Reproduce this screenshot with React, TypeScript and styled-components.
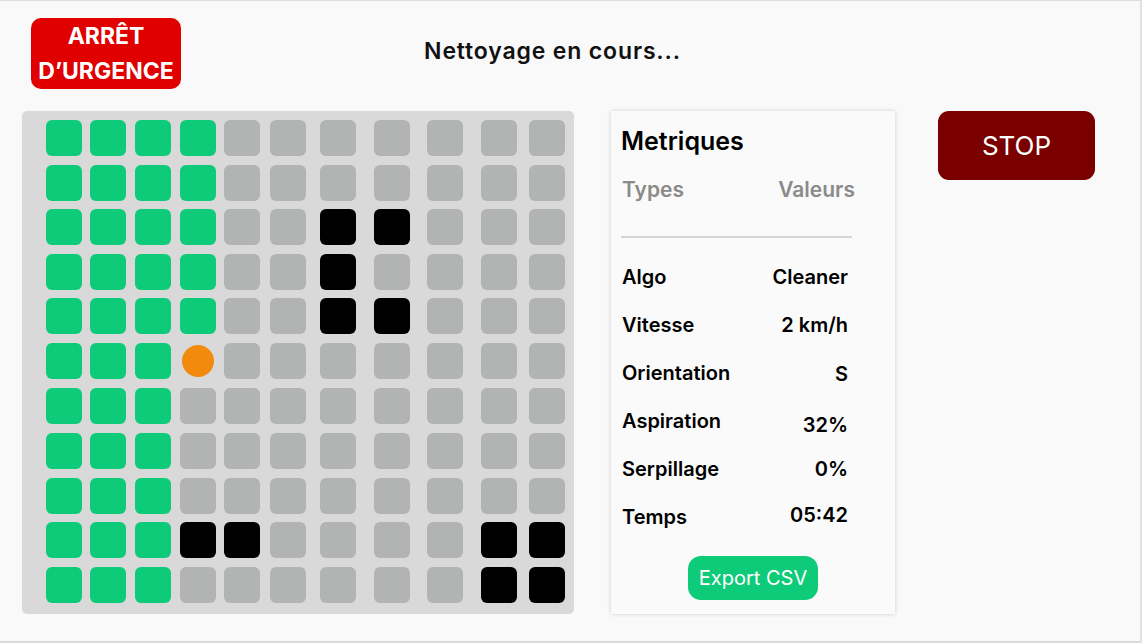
import React from "react";
import styled, { createGlobalStyle } from "styled-components";

const Global = createGlobalStyle`
  html, body { margin: 0; padding: 0; background: #f9f9f9; }
  body { font-family: Inter, "Noto Sans", Arial, sans-serif; }
`;

const Frame = styled.div`
  box-sizing: border-box;
  width: 1142px;
  height: 643px;
  background: #f9f9f9;
  border-top: 1px solid #dcdcdc;
  border-right: 2px solid #e2e2e2;
  border-bottom: 2px solid #dcdcdc;
  display: flex;
  flex-direction: column;
  overflow: hidden;
`;

const Header = styled.header`
  display: flex;
  align-items: flex-start;
  padding: 17px 216px 0 31px;
`;

const EmergencyButton = styled.button`
  width: 150px;
  height: 71px;
  border: none;
  border-radius: 10px;
  background: #e00000;
  color: #fff;
  font-family: Inter, Roboto, sans-serif;
  font-weight: 700;
  font-size: 23px;
  line-height: 35px;
  padding: 1px 0 0;
  text-align: center;
`;

const Title = styled.h1`
  flex: 1;
  margin: 19px 0 0;
  text-align: center;
  font-size: 23px;
  font-weight: 600;
  letter-spacing: 0.85px;
  line-height: 28px;
  color: #111;
`;

const Main = styled.main`
  display: flex;
  align-items: flex-start;
  padding: 22px 0 0 22px;
`;

const Board = styled.div`
  box-sizing: border-box;
  width: 552px;
  height: 503px;
  background: #d9d9d9;
  border-radius: 5px;
  padding: 9px 0 0 24px;
  display: grid;
  grid-template-columns: 44px 45px 45px 44px 46px 50px 54px 53px 54px 48px 36px;
  grid-template-rows: 45px 44px 45px 44px 45px 45px 45px 45px 44px 45px 36px;
`;

const Cell = styled.div<{ $kind: string }>`
  width: 36px;
  height: 36px;
  border-radius: 6px;
  background: ${(p) =>
    p.$kind === "G" ? "#0ecb7a" : p.$kind === "B" ? "#000" : p.$kind === "O" ? "transparent" : "#b1b4b3"};
  display: flex;
  align-items: center;
  justify-content: center;
`;

const Robot = styled.div`
  width: 32px;
  height: 32px;
  border-radius: 50%;
  background: #f28a0e;
`;

const Card = styled.section`
  box-sizing: border-box;
  width: 284px;
  height: 503px;
  margin-left: 37px;
  background: #fafafa;
  box-shadow: 0 0 4px rgba(0, 0, 0, 0.18);
  padding: 15px 10px 0 10px;
  display: flex;
  flex-direction: column;
`;

const CardTitle = styled.h2`
  margin: 0;
  font-size: 25px;
  font-weight: 600;
  line-height: 30px;
  color: #000;
`;

const HeadRow = styled.div`
  display: flex;
  justify-content: space-between;
  width: 234px;
  margin-top: 20px;
  padding-left: 1px;
  box-sizing: border-box;
  font-size: 21px;
  font-weight: 600;
  line-height: 28px;
  color: #8a8a8a;
`;

const Divider = styled.hr`
  width: 231px;
  margin: 32px 0 15px;
  border: none;
  border-top: 2px solid #d6d6d6;
`;

const Row = styled.div`
  display: flex;
  justify-content: space-between;
  align-items: center;
  width: 227px;
  height: 48px;
  padding-left: 1px;
  box-sizing: border-box;
  font-size: 20px;
  font-weight: 600;
  color: #000;
`;

const Value = styled.span<{ $dy?: number }>`
  transform: translateY(${(p) => p.$dy || 0}px);
`;

const ExportButton = styled.button`
  align-self: center;
  margin-top: 15px;
  width: 130px;
  height: 44px;
  border: none;
  border-radius: 13px;
  background: #0ecb7a;
  color: #fff;
  font-family: Inter, sans-serif;
  font-size: 20px;
  font-weight: 400;
  padding: 0;
`;

const StopButton = styled.button`
  margin-left: 43px;
  width: 157px;
  height: 69px;
  border: none;
  border-radius: 11px;
  background: #7a0000;
  color: #fff;
  font-family: Inter, Roboto, sans-serif;
  font-size: 26px;
  font-weight: 400;
`;

const MAP = [
  "GGGG-------",
  "GGGG-------",
  "GGGG--BB---",
  "GGGG--B----",
  "GGGG--BB---",
  "GGGO-------",
  "GGG--------",
  "GGG--------",
  "GGG--------",
  "GGGBB----BB",
  "GGG------BB",
];

const METRICS: [string, string, number][] = [
  ["Algo", "Cleaner", 0],
  ["Vitesse", "2 km/h", 0],
  ["Orientation", "S", 1],
  ["Aspiration", "32%", 4],
  ["Serpillage", "0%", 0],
  ["Temps", "05:42", -2],
];

export default function App() {
  return (
    <>
      <Global />
      <Frame>
        <Header>
          <EmergencyButton>
            ARRÊT
            <br />
            D’URGENCE
          </EmergencyButton>
          <Title>Nettoyage en cours...</Title>
        </Header>
        <Main>
          <Board>
            {MAP.flatMap((row, r) =>
              row.split("").map((k, c) => (
                <Cell key={`${r}-${c}`} $kind={k}>
                  {k === "O" && <Robot />}
                </Cell>
              ))
            )}
          </Board>
          <Card>
            <CardTitle>Metriques</CardTitle>
            <HeadRow>
              <span>Types</span>
              <span>Valeurs</span>
            </HeadRow>
            <Divider />
            {METRICS.map(([k, v, dy]) => (
              <Row key={k}>
                <span>{k}</span>
                <Value $dy={dy}>{v}</Value>
              </Row>
            ))}
            <ExportButton>Export CSV</ExportButton>
          </Card>
          <StopButton>STOP</StopButton>
        </Main>
      </Frame>
    </>
  );
}
